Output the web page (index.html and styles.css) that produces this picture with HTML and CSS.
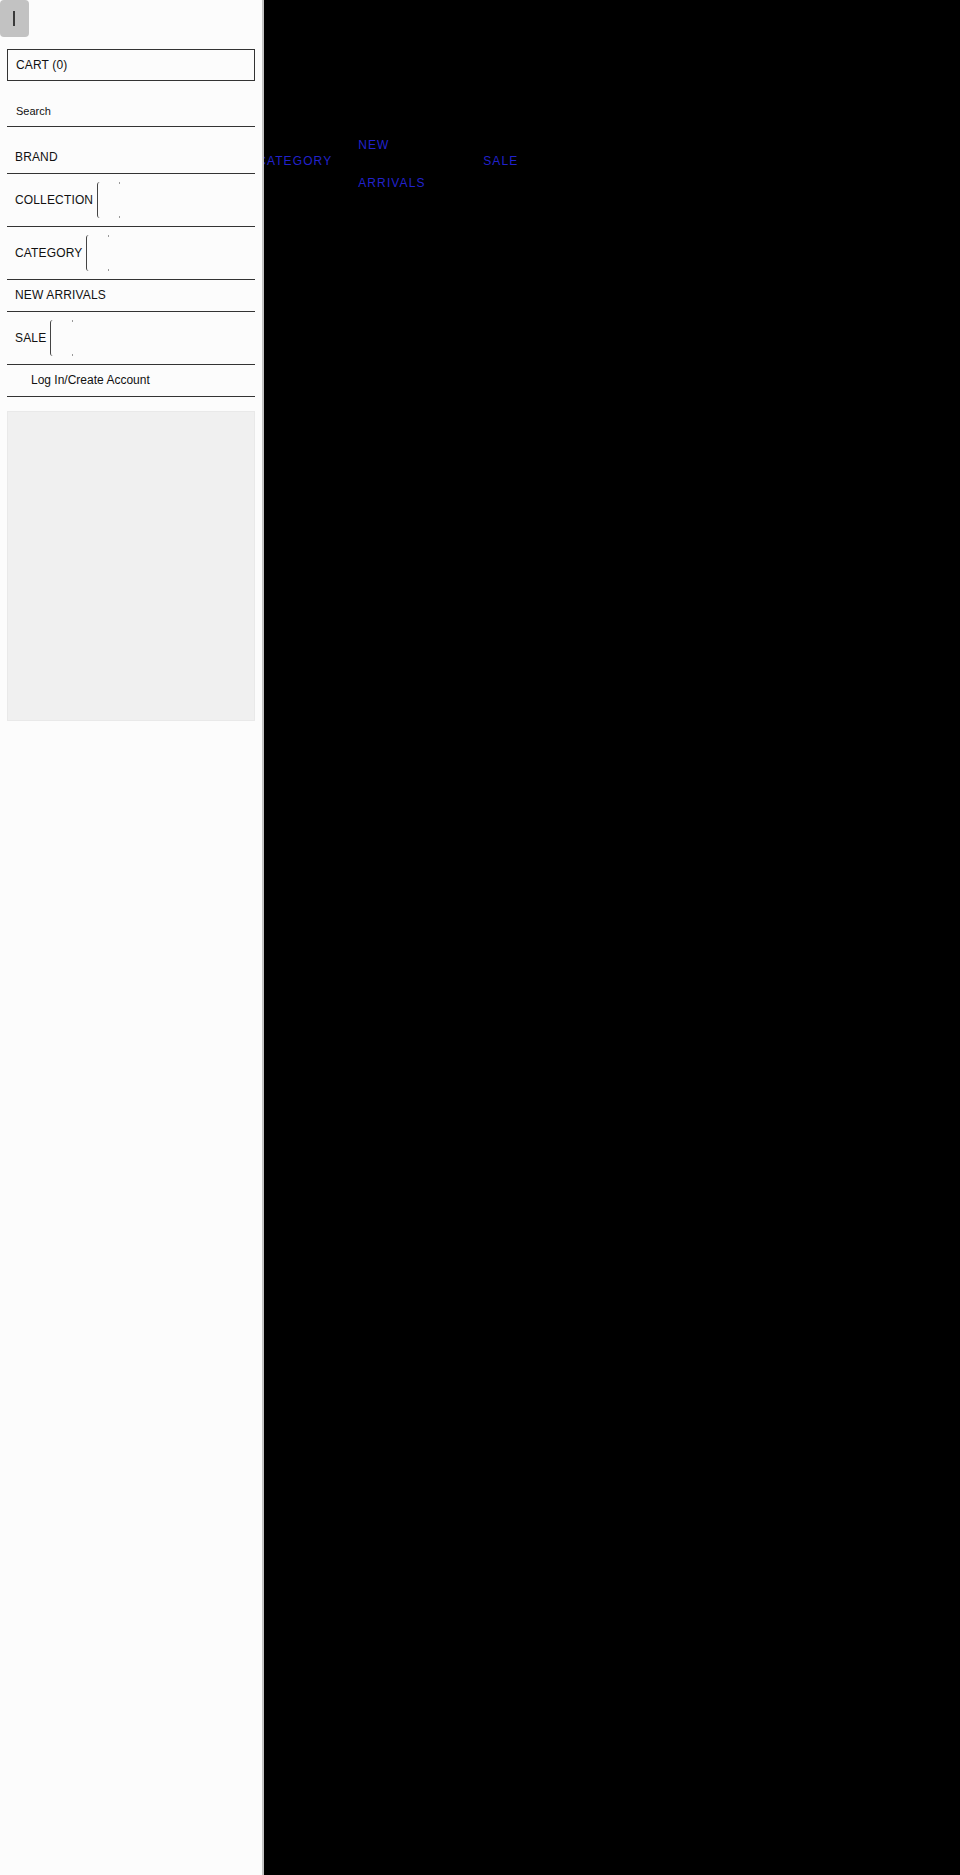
FILE: index.html
```html
<!DOCTYPE html>
<html lang="en">
<head>
<meta charset="utf-8">
<title>Store</title>
<link rel="stylesheet" href="styles.css">
</head>
<body>
<main class="page">
  <nav class="main-nav">
    <a class="nav-link nav-single" href="#">BRAND</a>
    <a class="nav-link nav-single" href="#">COLLECTION</a>
    <a class="nav-link nav-single" href="#">CATEGORY</a>
    <a class="nav-link nav-wrap" href="#">NEW ARRIVALS</a>
    <a class="nav-link nav-single" href="#">SALE</a>
  </nav>
</main>

<aside class="drawer">
  <button class="toggle" type="button" aria-label="Close menu"><span class="toggle-bar"></span></button>
  <a class="cart" href="#">CART (0)</a>
  <div class="search">Search</div>
  <ul class="menu">
    <li class="menu-item">BRAND</li>
    <li class="menu-item">COLLECTION<span class="expander"></span></li>
    <li class="menu-item">CATEGORY<span class="expander"></span></li>
    <li class="menu-item">NEW ARRIVALS</li>
    <li class="menu-item">SALE<span class="expander"></span></li>
    <li class="menu-item menu-login">Log In/Create Account</li>
  </ul>
  <div class="promo"></div>
</aside>
</body>
</html>
```

FILE: styles.css
```css
html {
  background: #000;
}

body {
  margin: 0;
  min-height: 1875px;
  background: #000;
  font-family: "Liberation Sans", Arial, sans-serif;
}

.page {
  min-height: 1875px;
}

.main-nav {
  display: flex;
  align-items: center;
  gap: 26px;
  padding-left: 70px;
  padding-top: 126px;
}

.nav-link {
  color: #2222cc;
  text-decoration: none;
  font-size: 12px;
  letter-spacing: 1.1px;
  line-height: 38px;
}

.nav-single {
  padding-bottom: 6px;
}

.nav-wrap {
  display: block;
  width: 99px;
  word-spacing: 200px;
}

/* Drawer overlay */
.drawer {
  position: fixed;
  top: 0;
  left: 0;
  bottom: 0;
  width: 262px;
  background: #fcfcfc;
  border-right: 2px solid #c4c4c4;
}

.toggle {
  display: block;
  width: 29px;
  height: 37px;
  margin: 0;
  padding: 0;
  border: none;
  border-radius: 4px;
  background: #c2c2c2;
}

.toggle-bar {
  display: block;
  width: 2px;
  height: 15px;
  margin: 0 0 0 13px;
  background: #3a3a3a;
}

.cart {
  display: block;
  margin: 12px 7px 0;
  border: 1px solid #333;
  padding-left: 8px;
  line-height: 30px;
  font-size: 12px;
  letter-spacing: 0.15px;
  color: #111;
  text-decoration: none;
}

.search {
  margin: 16px 7px 0;
  padding-left: 9px;
  line-height: 29px;
  font-size: 11px;
  color: #111;
  border-bottom: 1px solid #333;
}

.menu {
  list-style: none;
  margin: 15px 7px 0;
  padding: 0;
}

.menu-item {
  display: flex;
  align-items: center;
  padding: 8px 8px;
  line-height: 15px;
  font-size: 12px;
  letter-spacing: 0.15px;
  color: #111;
  border-bottom: 1px solid #333;
}

.menu-login {
  padding-left: 24px;
  letter-spacing: 0;
}

.expander {
  position: relative;
  display: inline-block;
  width: 22px;
  height: 36px;
  margin-left: 4px;
  border-left: 1px solid #444;
  border-radius: 3px 0 0 3px;
}

.expander::before,
.expander::after {
  content: "";
  position: absolute;
  right: 0;
  width: 1px;
  height: 2px;
  background: #999;
}

.expander::before {
  top: 0;
}

.expander::after {
  bottom: 0;
}

.promo {
  margin: 14px 7px 0;
  height: 308px;
  background: #f0f0f0;
  border: 1px solid #e9e9e9;
}
```
